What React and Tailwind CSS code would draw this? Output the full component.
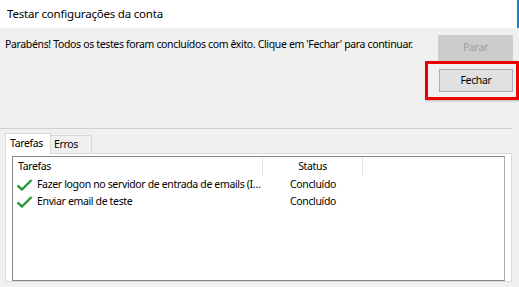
import React from "react";

const rows = [
  { task: "Fazer logon no servidor de entrada de emails (I…", status: "Concluído" },
  { task: "Enviar email de teste", status: "Concluído" },
];

const Check = () => (
  <svg width="17" height="12" viewBox="0 0 17 12" className="shrink-0">
    <path d="M1.5 6.5 L6 10.5 L15.5 1" fill="none" stroke="#2a9a35" strokeWidth="2.4" />
  </svg>
);

export default function App() {
  return (
    <div
      className="w-[519px] h-[287px] bg-[#f0f0f0] overflow-hidden text-[#000] flex flex-col text-[10.5px] tracking-[-0.35px]"
      style={{ fontFamily: '"Noto Sans", "Open Sans", sans-serif' }}
    >
      <div className="h-[28px] bg-white border-r-2 border-[#1a7fd6] flex items-center pl-[7px] text-[11.5px] tracking-[-0.2px] shrink-0">
        Testar configurações da conta
      </div>

      <div className="flex justify-between pl-[5px]">
        <p className="mt-[9px] leading-[14px] whitespace-nowrap">
          Parabéns! Todos os testes foram concluídos com êxito. Clique em 'Fechar' para continuar.
        </p>
        <div className="w-[94px] flex flex-col">
          <button className="ml-[13px] mt-[7px] w-[75px] h-[26px] bg-[#cccccc] text-[#a0a0a0]">
            Parar
          </button>
          <div className="h-[39px] border-[3px] border-[#ee0000] pl-[11px] pt-[5px] shadow-[1px_1px_2px_rgba(0,0,0,0.25)]">
            <button className="w-[74px] h-[23px] bg-[#e1e1e1] border border-[#adadad]">
              Fechar
            </button>
          </div>
        </div>
      </div>

      <div className="mt-[28px] w-[512px] h-px bg-[#cfcfcf]" />

      <div className="flex items-end pl-[5px] mt-[4px] h-[20px]">
        <div className="w-[46px] h-[21px] bg-white border border-b-0 border-[#d9d9d9] pl-[4px] leading-[18px] relative z-10 -mb-px">
          Tarefas
        </div>
        <div className="w-[41px] h-[18px] border border-b-0 border-l-0 border-[#d9d9d9] pl-[3px] leading-[17px]">
          Erros
        </div>
      </div>

      <div className="ml-[5px] w-[507px] h-[129px] bg-white border border-[#d9d9d9] pl-[6px] pr-[6px] pt-[2px]">
        <div className="h-[125px] border border-[#828790] border-r-[#adadad]">
          <div className="flex h-[19px] items-center">
            <div className="w-[250px] pl-[5px] border-r border-[#e5e5e5] h-full flex items-center">Tarefas</div>
            <div className="w-[100px] text-center border-r border-[#e5e5e5] h-full flex items-center justify-center">
              Status
            </div>
          </div>
          {rows.map((r) => (
            <div key={r.task} className="flex h-[17px] items-center">
              <div className="w-[250px] pl-[3px] flex items-center gap-[4px] whitespace-nowrap overflow-hidden">
                <Check />
                <span>{r.task}</span>
              </div>
              <div className="w-[100px] text-center">{r.status}</div>
            </div>
          ))}
        </div>
      </div>
    </div>
  );
}
